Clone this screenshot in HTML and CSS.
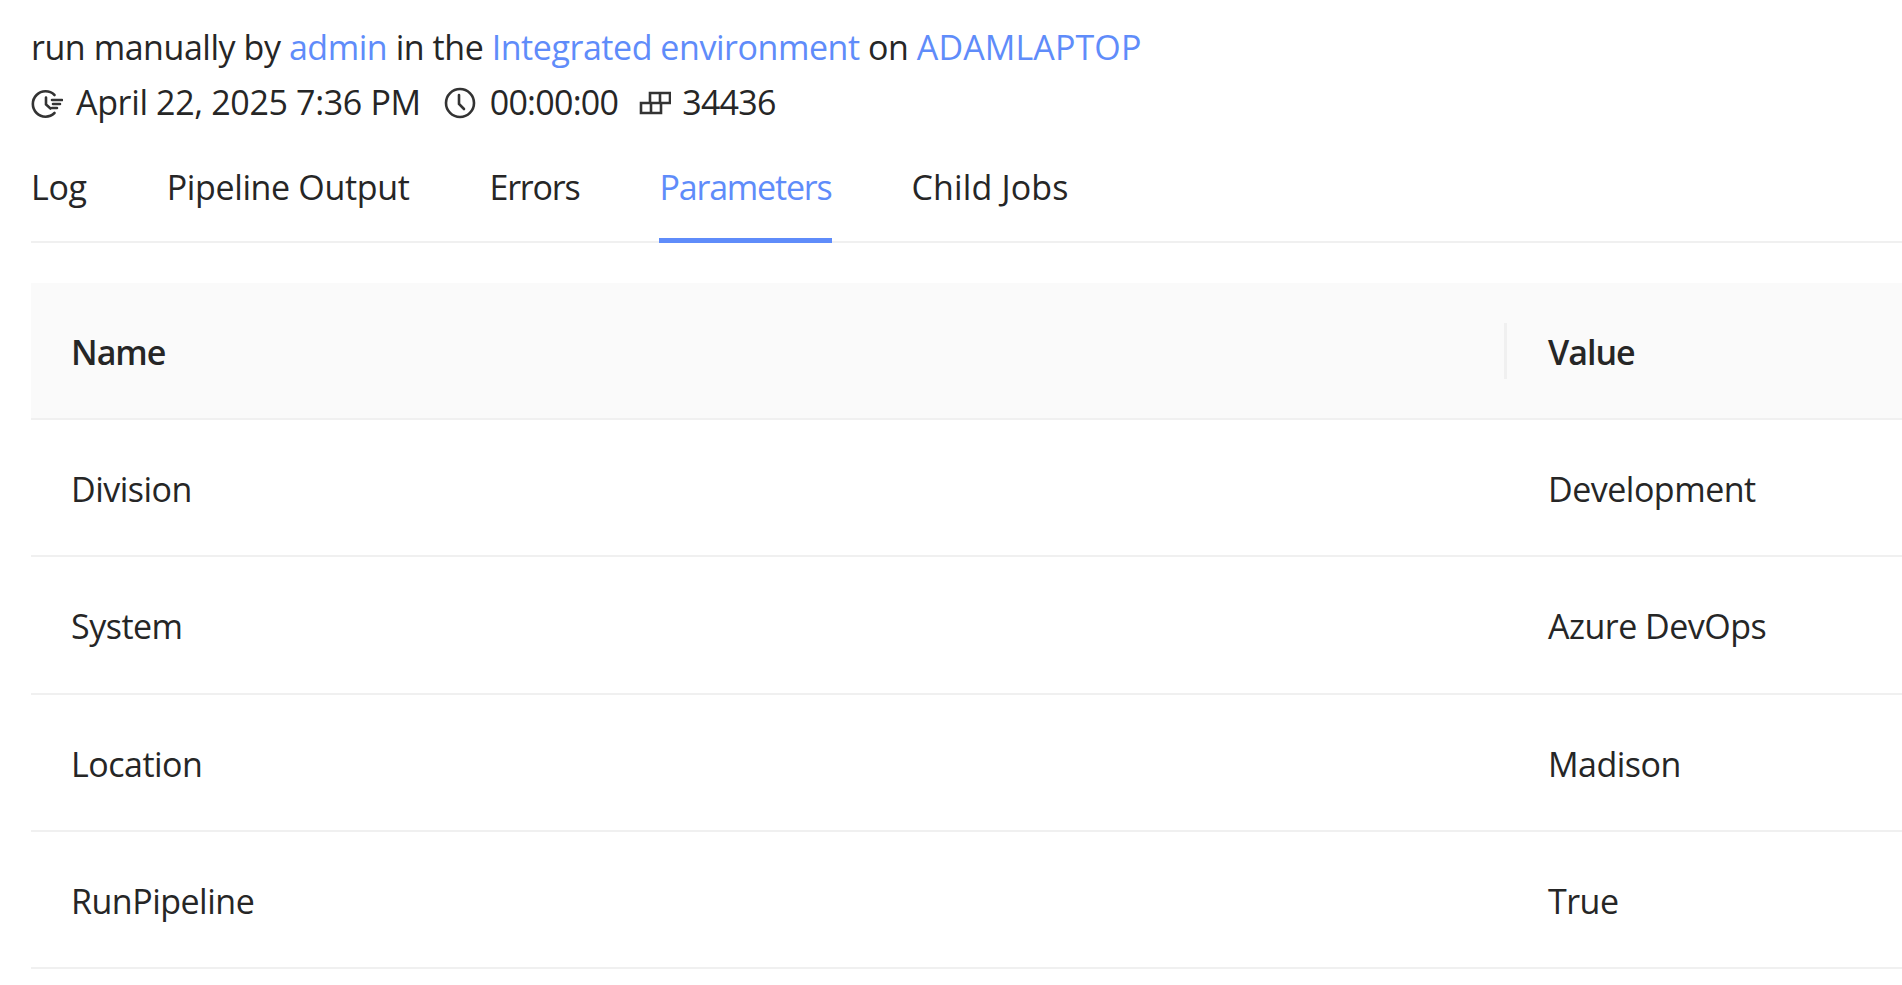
FILE: index.html
```html
<!DOCTYPE html>
<html lang="en">
<head>
    <meta charset="UTF-8">
    <meta name="viewport" content="width=device-width, initial-scale=1.0">
    <title>Job Details</title>
    <link rel="stylesheet" href="styles.css">
</head>
<body>
    <div class="summary">
        run manually by <a href="#">admin</a> in the <a href="#">Integrated environment</a> on <a href="#" class="host">ADAMLAPTOP</a>
    </div>
    <div class="meta">
        <span class="meta-item">
            <svg class="icon" viewBox="0 0 32 32" fill="none" stroke="currentColor" stroke-width="2.6" stroke-linecap="round">
                <path d="M23.5 8A12.7 12.7 0 1 0 23.5 26"/>
                <path d="M15 10.5v7l4.5 4"/>
                <path d="M21 13h10M22 17h7M21 21h5"/>
            </svg>
            April 22, 2025 7:36 PM
        </span>
        <span class="meta-item tight">
            <svg class="icon clock" viewBox="0 0 32 32" fill="none" stroke="currentColor" stroke-width="2.6" stroke-linecap="round">
                <circle cx="16" cy="16" r="14"/>
                <path d="M15 8v9l5 5"/>
            </svg>
            00:00:00
        </span>
        <span class="meta-item tight">
            <svg class="icon" viewBox="0 0 32 32" fill="none" stroke="currentColor" stroke-width="2.6">
                <path d="M2 16h20v10H2zM12 16v10M11 6h20v10H11zM21 6v10"/>
            </svg>
            34436
        </span>
    </div>
    <nav class="tabs">
        <a href="#">Log</a>
        <a href="#">Pipeline Output</a>
        <a href="#" class="narrow">Errors</a>
        <a href="#" class="narrow active">Parameters</a>
        <a href="#" class="wide">Child Jobs</a>
    </nav>
    <table class="params">
        <thead>
            <tr>
                <th class="name-col">Name</th>
                <th>Value</th>
            </tr>
        </thead>
        <tbody>
            <tr><td>Division</td><td>Development</td></tr>
            <tr><td>System</td><td>Azure DevOps</td></tr>
            <tr><td>Location</td><td>Madison</td></tr>
            <tr><td>RunPipeline</td><td>True</td></tr>
        </tbody>
    </table>
</body>
</html>
```

FILE: styles.css
```css
body {
    margin: 0;
    padding: 20px 0 0 31px;
    background-color: #fff;
    color: #262626;
    font-family: "Open Sans", "Noto Sans", sans-serif;
    font-size: 34px;
    font-weight: 380;
    line-height: 55px;
    letter-spacing: -0.35px;
    overflow: hidden;
}

a {
    color: #5f8cfa;
    text-decoration: none;
}

.summary {
    letter-spacing: -0.45px;
}

.summary .host {
    letter-spacing: 0.1px;
}

.meta {
    display: flex;
    gap: 23px;
}

.meta-item {
    display: flex;
    align-items: center;
    gap: 13px;
}

.meta-item.tight {
    letter-spacing: -0.75px;
}

.meta-item:last-child {
    margin-left: -2px;
    gap: 11px;
}

.icon {
    width: 32px;
    height: 32px;
    color: #333;
}

.icon.clock {
    margin-right: 1px;
}

.tabs {
    display: flex;
    gap: 80px;
    margin-top: 30px;
    border-bottom: 2px solid #f0f0f0;
}

.tabs a {
    color: #262626;
    padding: 0 0 23px;
    margin-bottom: -2px;
    border-bottom: 5px solid transparent;
}

.tabs a.narrow {
    letter-spacing: -1.2px;
}

.tabs a.wide {
    letter-spacing: 0.15px;
}

.tabs a.active {
    color: #5f8cfa;
    border-bottom-color: #5f8cfa;
}

.params {
    width: 1871px;
    margin-top: 40px;
    border-collapse: collapse;
    letter-spacing: -0.5px;
}

.params th,
.params td {
    padding: 4px 41px 0;
    text-align: left;
    border-bottom: 2px solid #f0f0f0;
}

.params th:first-child,
.params td:first-child {
    padding-left: 40px;
}

.params th {
    height: 131px;
    background-color: #fafafa;
    font-weight: 600;
    letter-spacing: -1px;
}

.params td {
    height: 131.3px;
}

.name-col {
    width: 1395px;
    position: relative;
}

.name-col::after {
    content: "";
    position: absolute;
    right: 0;
    top: 40px;
    height: 56px;
    width: 3px;
    background-color: #f0f0f0;
}
```
